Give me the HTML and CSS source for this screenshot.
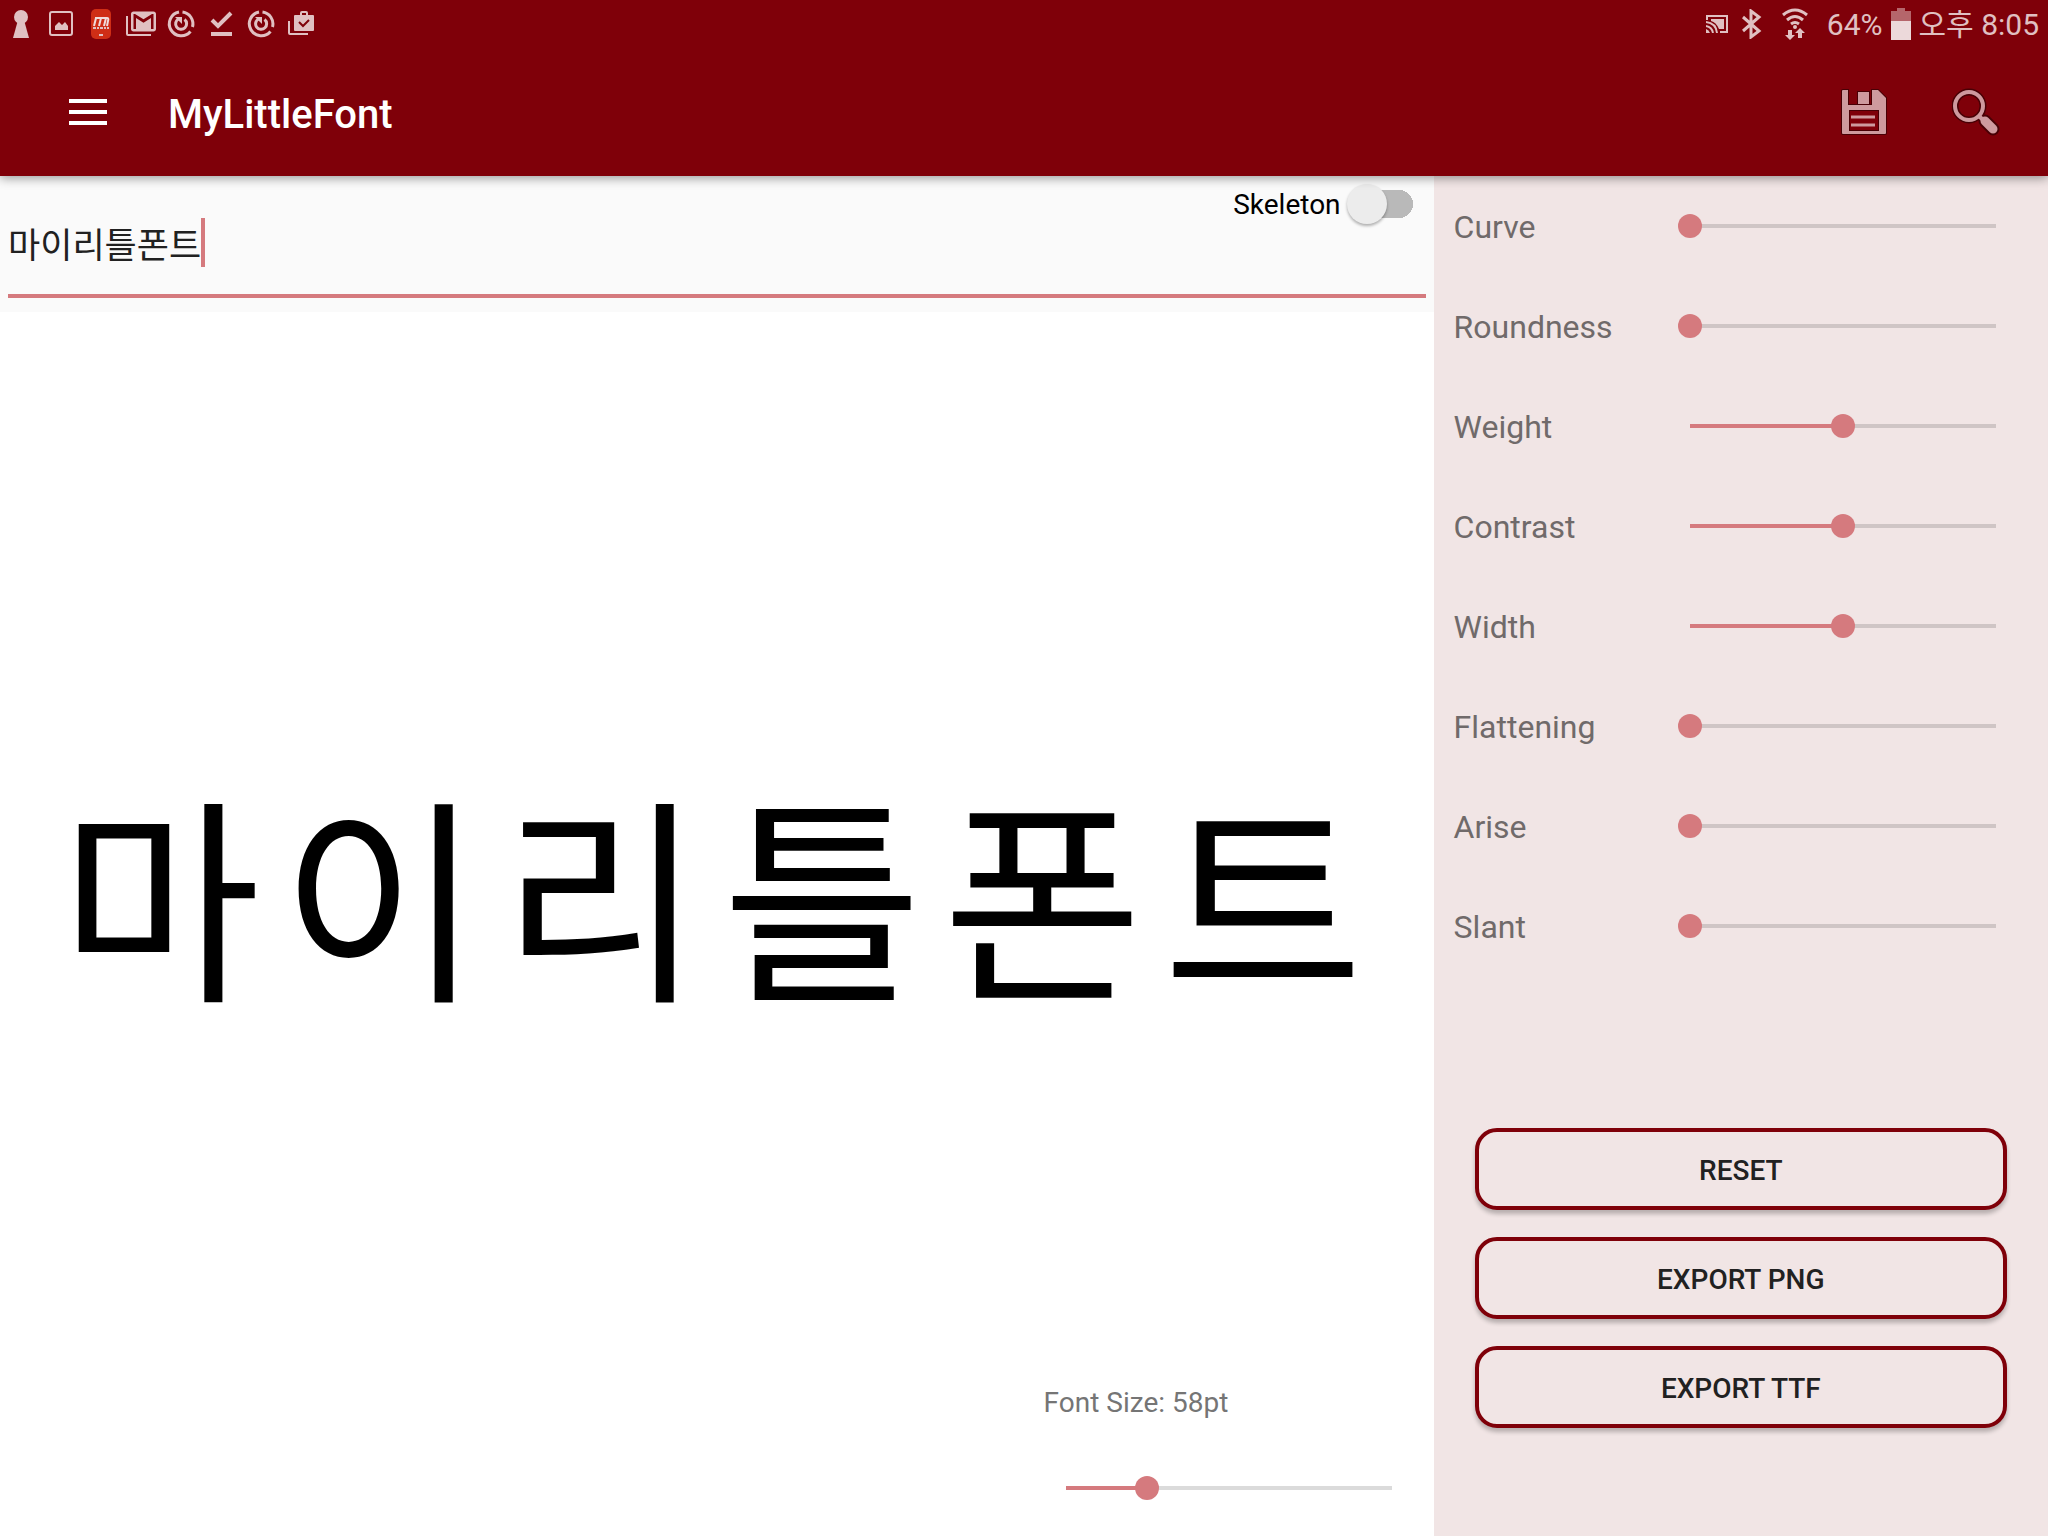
FILE: index.html
```html
<!DOCTYPE html>
<html lang="ko">
<head>
<meta charset="utf-8">
<meta name="viewport" content="width=device-width, initial-scale=1">
<title>MyLittleFont</title>
<link rel="stylesheet" href="styles.css">
</head>
<body>
<div class="app">
  <header class="top">
    <div class="status">
      <div class="status-notes">
        <svg class="note" viewBox="0 0 40 48" aria-hidden="true"><circle cx="20" cy="17" r="7"/><path d="M17 20h6l5 18H12z"/></svg>
        <svg class="note" viewBox="0 0 40 48" aria-hidden="true"><rect class="line" x="9" y="12" width="22" height="23" rx="2"/><path d="M14 30v-4l4-4 3 3 3-3 3 4v4z"/></svg>
        <svg class="note" viewBox="0 0 40 48" aria-hidden="true"><rect class="m-bg" x="10" y="9" width="20" height="30" rx="5"/><path class="m-line" d="M13 26l2-8M18 26l2-8M23 26l2-8M14 18h12q2 0 1 3l-1 5"/><path d="M12 27h3v2h-3zM16 27h2v2h-2zM19 27h3v2h-3zM23 27h2v2h-2zM26 27h2v2h-2zM18 34h4v2h-4z"/></svg>
        <svg class="note" viewBox="0 0 40 48" aria-hidden="true"><path class="line" d="M6 16v18q0 1 1 1h23"/><path transform="translate(7.5 6.5) scale(1.25)" d="M20 4H4c-1.100 0-2 .9-2 2v12c0 1.100.9 2 2 2h16c1.100 0 2-.9 2-2V6c0-1.100-.9-2-2-2zm0 14h-2V9.250L12 13 6 9.250V18H4V6h1.200l6.800 4.250L18.800 6H20v12z"/></svg>
        <svg class="note" viewBox="0 0 40 48" aria-hidden="true"><g class="ring"><path d="M21.500 12A12 12 0 0 1 31.500 27M29.500 31.500A12 12 0 1 1 18 12"/><path d="M23.500 19.500a5.500 5.500 0 1 1-6-.5"/></g><path d="M14 17h7v7z"/></svg>
        <svg class="note" viewBox="0 0 40 48" aria-hidden="true"><path class="tick" d="M11 20l6 6 13-13"/><path d="M10 32h21v4H10z"/></svg>
        <svg class="note" viewBox="0 0 40 48" aria-hidden="true"><g class="ring"><path d="M21.500 12A12 12 0 0 1 31.500 27M29.500 31.500A12 12 0 1 1 18 12"/><path d="M23.500 19.500a5.500 5.500 0 1 1-6-.5"/></g><path d="M14 17h7v7z"/></svg>
        <svg class="note" viewBox="0 0 40 48" aria-hidden="true"><path class="line" d="M8 21v12q0 1 1 1h18"/><rect x="13" y="15" width="20" height="16" rx="1"/><path class="line" d="M20 15v-2q0-1 1-1h4q1 0 1 1v2"/><path class="cut" d="M18 22l4 4 6-6"/></svg>
      </div>
      <div class="status-info">
        <svg class="cast" viewBox="0 0 22 18" aria-hidden="true"><path class="line" d="M1 5V1h20v16h-7"/><path d="M5 4h13v10h-5Q10 7 5 6z"/><path class="line" d="M0 7q10 1 11 11M0 11q6 1 7 7"/><path d="M0 14q3 1 4 4H0z"/></svg>
        <svg class="bluetooth" viewBox="0 0 20 30" aria-hidden="true"><path class="bt" d="M1 8l16 14-8 6V2l8 6L1 22"/></svg>
        <svg class="wifi" viewBox="0 0 26 32" aria-hidden="true"><path class="wave" d="M1 7q12-10 24 0M5 12q8-7 16 0M9 16q4-3 8 0"/><circle cx="13" cy="19" r="2"/><path d="M6 22h4v5h3l-5 5-5-5h3zM16 30h4v-5h3l-5-5-5 5h3z"/></svg>
        <span class="percent">64%</span>
        <svg class="battery" viewBox="0 0 20 32" aria-hidden="true"><path class="empty" d="M0 3h6V0h8v3h6v10H0z"/><path class="full" d="M0 13h20v19H0z"/></svg>
        <span class="clock">오후 8:05</span>
      </div>
    </div>
    <div class="toolbar">
      <button class="icon-button" type="button" aria-label="Menu"><svg class="menu" viewBox="0 0 38 26"><path d="M0 0h38v4H0zM0 11h38v4H0zM0 22h38v4H0z"/></svg></button>
      <h1 class="title">MyLittleFont</h1>
      <button class="icon-button" type="button" aria-label="Save"><svg class="tool" viewBox="0 0 48 48"><path fill-rule="evenodd" d="M3 2h5v15h24V2h6l8 8v35q0 1-1 1H3q-1 0-1-1V3q0-1 1-1zM9 22v21h30V22z"/><path d="M18 4h11v12H18z"/><path class="bars" d="M11 29h24M11 37h24"/></svg></button>
      <button class="icon-button" type="button" aria-label="Search"><svg class="tool" viewBox="0 0 48 48"><path class="edge-wide" d="M33 33l8 8"/><circle class="edge" cx="17" cy="18" r="14"/><path class="neck" d="M27 28l4 4"/><circle class="lens" cx="17" cy="18" r="14"/><path class="handle" d="M33 33l8 8"/></svg></button>
    </div>
  </header>

  <main class="work">
    <section class="editor">
      <div class="entry">
        <div class="field">
          <input class="text" type="text" value="마이리틀폰트" aria-label="Preview text"><span class="caret"></span>
        </div>
        <label class="skeleton">Skeleton <input class="switch" type="checkbox"></label>
      </div>
      <div class="stage">
        <p class="preview"><span>마</span><span>이</span><span>리</span><span>틀</span><span>폰</span><span>트</span></p>
        <div class="font-size">
          <label for="size">Font Size: 58pt</label>
          <input class="slider" id="size" type="range" min="0" max="100" value="25" style="--value:.25">
        </div>
      </div>
    </section>

    <aside class="panel">
      <div class="controls">
        <div class="control"><label for="curve">Curve</label><input class="slider" id="curve" type="range" value="0" style="--value:0"></div>
        <div class="control"><label for="roundness">Roundness</label><input class="slider" id="roundness" type="range" value="0" style="--value:0"></div>
        <div class="control"><label for="weight">Weight</label><input class="slider" id="weight" type="range" value="50" style="--value:.5"></div>
        <div class="control"><label for="contrast">Contrast</label><input class="slider" id="contrast" type="range" value="50" style="--value:.5"></div>
        <div class="control"><label for="width">Width</label><input class="slider" id="width" type="range" value="50" style="--value:.5"></div>
        <div class="control"><label for="flattening">Flattening</label><input class="slider" id="flattening" type="range" value="0" style="--value:0"></div>
        <div class="control"><label for="arise">Arise</label><input class="slider" id="arise" type="range" value="0" style="--value:0"></div>
        <div class="control"><label for="slant">Slant</label><input class="slider" id="slant" type="range" value="0" style="--value:0"></div>
      </div>
      <div class="actions">
        <button class="action" type="button">RESET</button>
        <button class="action" type="button">EXPORT PNG</button>
        <button class="action" type="button">EXPORT TTF</button>
      </div>
    </aside>
  </main>
</div>
</body>
</html>
```

FILE: styles.css
```css
:root {
  --brand: #7f0009;
  --accent: #d57a7e;
  --status: #e0c0c2;
  --tool: #ce9a9e;
  --tool-edge: #480005;
}

* { box-sizing: border-box; }

body {
  margin: 0;
  background: #fff;
  font-family: Roboto, "Noto Sans CJK KR", sans-serif;
}

button, input { font: inherit; }

.app {
  display: flex;
  flex-direction: column;
  min-height: 100vh;
}

/* Status bar and toolbar */
.top {
  position: relative;
  z-index: 1;
  background: var(--brand);
  box-shadow: 0 2px 10px rgba(0, 0, 0, .4);
}

.status {
  display: flex;
  justify-content: space-between;
  align-items: center;
  height: 48px;
  color: var(--status);
  fill: var(--status);
  font-size: 30px;
}

.status-notes { display: flex; padding-left: 1px; }
.note { width: 40px; height: 48px; }
.line { fill: none; stroke: var(--status); stroke-width: 2; }
.m-bg { fill: #cf2e16; }
.m-line { fill: none; stroke: #f0dcdc; stroke-width: 2; }
.ring { fill: none; stroke: var(--status); stroke-width: 3; }
.tick { fill: none; stroke: var(--status); stroke-width: 4; }
.cut { fill: none; stroke: var(--brand); stroke-width: 2; }

.status-info {
  display: flex;
  align-items: center;
  padding-right: 9px;
}
.cast { width: 22px; height: 18px; margin-right: 14px; }
.bluetooth { width: 20px; height: 30px; margin-right: 20px; }
.bt { fill: none; stroke: var(--status); stroke-width: 3; }
.wifi { width: 26px; height: 32px; margin-right: 19px; }
.wave { fill: none; stroke: var(--status); stroke-width: 3; }
.percent, .clock { padding-top: 2px; line-height: 46px; }
.battery { width: 20px; height: 32px; margin: 0 8px; }
.empty { fill: #b5666b; }
.full { fill: #ecd9da; }

.toolbar {
  display: flex;
  align-items: center;
  height: 128px;
  padding: 0 48px 0 69px;
}
.icon-button {
  display: flex;
  padding: 0;
  border: 0;
  background: none;
}
.icon-button + .icon-button { margin-left: 64px; }
.menu { width: 38px; height: 26px; fill: #fff; }
.title {
  flex: 1;
  margin: 0 0 0 61px;
  padding-top: 4px;
  color: #fff;
  font-size: 40px;
  font-weight: 500;
}
.tool {
  width: 48px;
  height: 48px;
  fill: var(--tool);
  stroke: var(--tool-edge);
  stroke-width: 2;
  paint-order: stroke;
}
.bars { stroke: var(--tool); stroke-width: 3; }
.edge { fill: none; stroke-width: 7; }
.edge-wide { stroke-width: 13; stroke-linecap: round; }
.neck { stroke: var(--tool); stroke-width: 4; }
.lens { fill: none; stroke: var(--tool); stroke-width: 4; }
.handle { stroke: var(--tool); stroke-width: 9; stroke-linecap: round; }

/* Editor */
.work {
  flex: 1;
  display: grid;
  grid-template-columns: 7fr 3fr;
}
.editor {
  display: flex;
  flex-direction: column;
}
.entry {
  display: grid;
  padding: 0 8px 14px;
  background: #fafafa;
}
.entry > *, .stage > * { grid-area: 1 / 1; }
.field {
  display: flex;
  align-items: center;
  padding: 42px 0 27px;
  border-bottom: 4px solid var(--accent);
}
.text {
  field-sizing: content;
  height: 49px;
  padding: 0;
  border: 0;
  outline: 0;
  background: none;
  color: #212121;
  font-family: "Noto Sans CJK KR", sans-serif;
  font-size: 35px;
}
.caret { width: 4px; height: 49px; background: var(--accent); }
.skeleton {
  justify-self: end;
  align-self: start;
  display: flex;
  align-items: center;
  gap: 6px;
  padding: 8px 13px 0 0;
  color: #000;
  font-size: 28px;
}
.switch {
  appearance: none;
  display: flex;
  align-items: center;
  width: 66px;
  height: 40px;
  margin: 0;
  background: linear-gradient(#b9b9b9, #b9b9b9) 20px center / 32px 28px no-repeat,
    radial-gradient(circle at 52px 20px, #b9b9b9 14px, transparent 14px);
}
.switch::before {
  content: "";
  width: 40px;
  height: 40px;
  border-radius: 50%;
  background: #ececec;
  box-shadow: 0 2px 3px rgba(0, 0, 0, .3);
}

.stage {
  flex: 1;
  display: grid;
  background: #fff;
}
/* Each syllable sits in its own cell, so the pitch is wider than the font's. */
.preview {
  place-self: center start;
  display: flex;
  gap: 20px;
  margin: 0;
  padding: 0 0 68px 60px;
  color: #000;
  font-family: "Noto Sans CJK KR", sans-serif;
  font-size: 218px;
  line-height: 320px;
}
.font-size {
  place-self: end;
  display: flex;
  flex-direction: column;
  gap: 57px;
  width: 390px;
  padding: 0 30px 36px 0;
  color: #757575;
  font-size: 28px;
}
.font-size .slider { margin-left: 10px; }

/* Sliders */
.slider {
  --track: rgba(0, 0, 0, .14);
  appearance: none;
  flex: 1;
  min-width: 0;
  height: 24px;
  margin: 0;
  background:
    linear-gradient(var(--accent), var(--accent)) 12px center / calc((100% - 24px) * var(--value)) 4px no-repeat,
    linear-gradient(var(--track), var(--track)) center / calc(100% - 24px) 4px no-repeat;
}
.font-size .slider { flex: none; }
.slider::-webkit-slider-thumb {
  appearance: none;
  width: 24px;
  height: 24px;
  border-radius: 50%;
  background: var(--accent);
}

/* Parameter panel */
.panel {
  display: flex;
  flex-direction: column;
  justify-content: space-between;
  padding-bottom: 108px;
  background: #f1e5e5;
}
.control {
  display: flex;
  align-items: center;
  height: 100px;
  padding: 0 40px 0 20px;
  color: #706a6a;
  font-size: 32px;
}
.control label { width: 224px; padding-top: 2px; }
.actions {
  display: flex;
  flex-direction: column;
  gap: 27px;
  padding: 0 41px;
}
.action {
  height: 82px;
  padding: 2px 0 0;
  border: 4px solid var(--brand);
  border-radius: 22px;
  background: #f1e5e5;
  box-shadow: 0 4px 4px rgba(0, 0, 0, .24);
  color: #212121;
  font-size: 28px;
  font-weight: 500;
}
```
